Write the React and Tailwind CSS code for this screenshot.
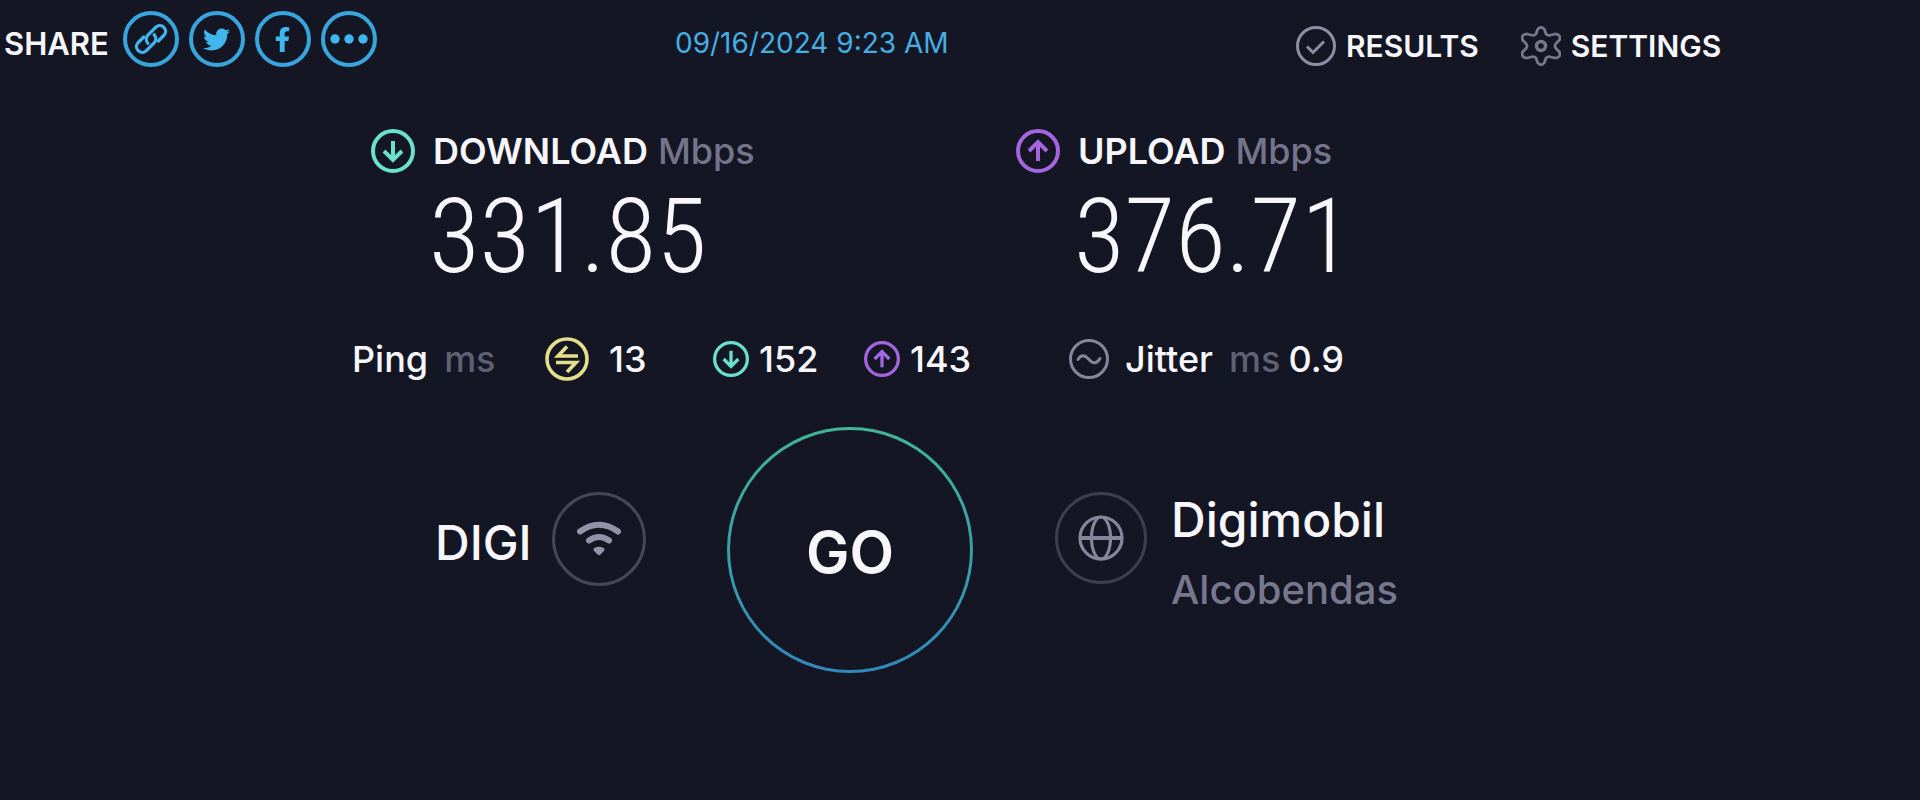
import { FaFacebookF, FaTwitter } from "react-icons/fa";

const shareLinks = [
  { label: "Copy link", icon: <LinkIcon /> },
  { label: "Twitter", icon: <FaTwitter size={27} /> },
  { label: "Facebook", icon: <FaFacebookF size={25} /> },
  { label: "More options", icon: <DotsIcon /> },
];

function LinkIcon() {
  return (
    <svg width="40" height="40" viewBox="0 0 32 32" fill="none" stroke="currentColor" strokeWidth="2.6" strokeLinecap="round" className="shrink-0">
      <path d="M13.5 19.5a5 5 0 0 1 .2-6.8l6.2-6.2a4.6 4.6 0 0 1 6.5 6.5l-4.600 4.600" />
      <path d="M18.500 12.500a5 5 0 0 1-.2 6.800l-6.200 6.200a4.600 4.600 0 0 1-6.500-6.500l4.600-4.600" />
    </svg>
  );
}

function DotsIcon() {
  return (
    <svg width="38" height="12" viewBox="0 0 38 12" fill="currentColor" className="shrink-0">
      <circle cx="5" cy="6" r="4.700" />
      <circle cx="19" cy="6" r="4.700" />
      <circle cx="33" cy="6" r="4.700" />
    </svg>
  );
}

function ArrowIcon({ up, className }) {
  return (
    <svg viewBox="0 0 44 44" fill="none" stroke="currentColor" strokeWidth="4" className={className}>
      <circle cx="22" cy="22" r="20" />
      <path d={up ? "M22 32V14M13 22l9-9 9 9" : "M22 12v18M13 22l9 9 9-9"} />
    </svg>
  );
}

function PingIcon() {
  return (
    <svg viewBox="0 0 44 44" fill="none" stroke="currentColor" strokeWidth="3.6" className="size-11 shrink-0 text-[#e5df8c]">
      <circle cx="22" cy="22" r="20" />
      <path d="M33 19H13l9-9.500M11 25.500h20l-9 9.500" />
    </svg>
  );
}

function JitterIcon() {
  return (
    <svg viewBox="0 0 40 40" fill="none" stroke="currentColor" strokeWidth="3" strokeLinecap="round" className="size-10 shrink-0 text-[#85869a]">
      <circle cx="20" cy="20" r="18.500" />
      <path d="M9 20.500c3-5 6.500-5 11 0s8 4 11-1" />
    </svg>
  );
}

function CheckIcon() {
  return (
    <svg viewBox="0 0 40 40" fill="none" stroke="currentColor" strokeWidth="3" className="size-10 shrink-0 text-[#8d8ea3]">
      <circle cx="20" cy="20" r="18.500" />
      <path d="M11 20.500l6 6 11-11" />
    </svg>
  );
}

function GearIcon() {
  return (
    <svg viewBox="0 0 40 40" fill="none" stroke="currentColor" strokeWidth="2.8" strokeLinejoin="round" className="size-10 shrink-0 text-[#77788c]">
      <path d="M16.500 3.500Q20-1 23.500 3.500L25 8Q27 10 30 9l4-1Q40 8 38.500 14L35 17.500Q33 20 35 22.500L38.500 26Q40 32 34 32l-4-1Q27 30 25 32l-1.500 4.500Q20 41 16.500 36.500L15 32Q13 30 10 31l-4 1Q0 32 1.500 26L5 22.500Q7 20 5 17.500L1.500 14Q0 8 6 8l4 1Q13 10 15 8Z" />
      <circle cx="20" cy="20" r="4.500" strokeWidth="3.400" />
    </svg>
  );
}

function WifiIcon() {
  return (
    <svg width="46" height="36" viewBox="0 0 46 36" fill="none" stroke="currentColor" strokeWidth="6" strokeLinecap="round">
      <path d="M4 10.500Q23-3 42 10.500" />
      <path d="M13 19.500Q23 12.500 33 19.500" />
      <path d="M19.500 28.500Q23 27 26.500 28.500L23 32Z" fill="currentColor" strokeWidth="4" strokeLinejoin="round" />
    </svg>
  );
}

function GlobeIcon() {
  return (
    <svg width="46" height="46" viewBox="0 0 46 46" fill="none" stroke="currentColor" strokeWidth="3.200">
      <circle cx="23" cy="23" r="21" />
      <ellipse cx="23" cy="23" rx="9.500" ry="21" />
      <path d="M2 23h42" strokeWidth="4" />
    </svg>
  );
}

function Speed({ title, value, up }) {
  return (
    <section className="flex gap-[18px]">
      <ArrowIcon up={up} className={up ? "size-11 shrink-0 text-[#a665e0]" : "size-11 shrink-0 text-[#6ce0cf]"} />
      <div>
        <h2 className="flex h-11 items-center gap-[10px] text-[36px] font-semibold">
          {title} <span className="font-medium text-[#74758a]">Mbps</span>
        </h2>
        <p className="-ml-1 font-['Roboto_Condensed','Open_Sans_Condensed','Liberation_Sans_Narrow',sans-serif] text-[104px] leading-[128px] font-light">
          {value}
        </p>
      </div>
    </section>
  );
}

function App() {
  return (
    <div className="min-h-screen overflow-hidden bg-[#141624] font-['Inter',sans-serif] leading-none whitespace-nowrap text-[#f7f7fb]">
      <header className="grid grid-cols-[675fr_621fr_624fr] pt-[11px]">
        <div className="flex h-14 items-center gap-[14px] pl-1">
          <span className="pt-2 text-[31px] font-semibold">SHARE</span>
          <div className="flex gap-[10px]">
            {shareLinks.map((link) => (
              <button
                key={link.label}
                aria-label={link.label}
                className="flex size-14 items-center justify-center rounded-full border-4 border-[#38a5dc] text-[#41b6ee]"
              >
                {link.icon}
              </button>
            ))}
          </div>
        </div>
        <time className="flex h-14 items-center pt-2 text-[28px] text-[#45aee2]">09/16/2024 9:23 AM</time>
        <nav className="flex h-14 items-center gap-[42px] pt-[14px] text-[30px] font-semibold">
          <a href="#results" className="flex items-center gap-[10px]">
            <CheckIcon />
            RESULTS
          </a>
          <a href="#settings" className="flex items-center gap-[10px]">
            <GearIcon />
            SETTINGS
          </a>
        </nav>
      </header>

      <main>
        <div className="grid grid-cols-[371fr_645fr_904fr] pt-[62px]">
          <div className="col-start-2">
            <Speed title="DOWNLOAD" value="331.85" />
          </div>
          <Speed title="UPLOAD" value="376.71" up />
        </div>

        <div className="grid grid-cols-[352fr_193fr_168fr_151fr_205fr_851fr] items-center pt-9 text-[36px] font-medium">
          <div className="col-start-2 flex gap-4">
            Ping <span className="text-[#5f6074]">ms</span>
          </div>
          <div className="flex items-center gap-5">
            <PingIcon />
            13
          </div>
          <div className="flex items-center gap-[10px]">
            <ArrowIcon className="size-9 shrink-0 text-[#6ce0cf]" />
            152
          </div>
          <div className="flex items-center gap-[10px]">
            <ArrowIcon up className="size-9 shrink-0 text-[#a665e0]" />
            143
          </div>
          <div className="flex items-center gap-4">
            <JitterIcon />
            Jitter
            <span className="flex gap-2">
              <span className="text-[#5f6074]">ms</span>
              0.9
            </span>
          </div>
        </div>

        <div className="grid grid-cols-[435fr_292fr_328fr_865fr] pt-[46px]">
          <div className="col-start-2 flex items-start gap-5 pt-[65px]">
            <span className="flex h-[102px] items-center text-[48px] font-medium">DIGI</span>
            <span className="flex size-[94px] items-center justify-center rounded-full border-[3px] border-[#454657] text-[#9293a8]">
              <WifiIcon />
            </span>
          </div>
          <button className="size-[246px] rounded-full bg-linear-to-b from-[#43b594] to-[#3287b9] p-[3px]">
            <span className="flex size-full items-center justify-center rounded-full bg-[#141624] pt-1 text-[58px] font-semibold">
              GO
            </span>
          </button>
          <div className="flex items-start gap-6 pt-[65px]">
            <span className="flex size-[92px] shrink-0 items-center justify-center rounded-full border-[3px] border-[#3d3e4f] text-[#85869b]">
              <GlobeIcon />
            </span>
            <div className="flex flex-col gap-[26px]">
              <span className="pt-1 text-[48px] font-medium">Digimobil</span>
              <span className="text-[40px] font-medium text-[#77788d]">Alcobendas</span>
            </div>
          </div>
        </div>
      </main>
    </div>
  );
}

export default App;
